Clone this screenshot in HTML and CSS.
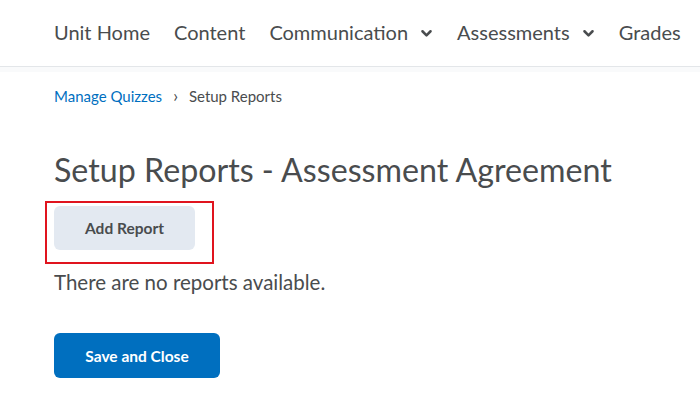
FILE: index.html
```html
<!DOCTYPE html>
<html lang="en">
<head>
    <meta charset="UTF-8">
    <title>Setup Reports</title>
    <link rel="stylesheet" href="styles.css">
</head>
<body>
    <nav class="navbar">
        <a class="nav-item">Unit Home</a>
        <a class="nav-item">Content</a>
        <a class="nav-item">Communication
            <svg class="chev" viewBox="0 0 14 10" width="13" height="9"><path d="M2.5 2.5 L7 7 L11.5 2.5" fill="none" stroke="#494c4e" stroke-width="2.8" stroke-linecap="round" stroke-linejoin="round"/></svg>
        </a>
        <a class="nav-item">Assessments
            <svg class="chev" viewBox="0 0 14 10" width="13" height="9"><path d="M2.5 2.5 L7 7 L11.5 2.5" fill="none" stroke="#494c4e" stroke-width="2.8" stroke-linecap="round" stroke-linejoin="round"/></svg>
        </a>
        <a class="nav-item">Grades</a>
    </nav>
    <div class="nav-shadow"></div>

    <main class="page">
        <div class="breadcrumbs">
            <a class="crumb-link">Manage Quizzes</a>
            <span class="crumb-sep">&rsaquo;</span>
            <span class="crumb-current">Setup Reports</span>
        </div>

        <h1>Setup Reports - Assessment Agreement</h1>

        <div class="highlight">
            <button class="btn btn-secondary">Add Report</button>
        </div>

        <p class="empty">There are no reports available.</p>

        <button class="btn btn-primary">Save and Close</button>
    </main>
</body>
</html>
```

FILE: styles.css
```css
body {
    margin: 0;
    font-family: Lato, "Open Sans", sans-serif;
    background: #ffffff;
    color: #494c4e;
}
.navbar {
    display: flex;
    align-items: center;
    height: 64px;
    padding-bottom: 2px;
    padding-left: 54px;
    gap: 24px;
    border-bottom: 1px solid #e3e6e9;
    white-space: nowrap;
    overflow: hidden;
}
.nav-item {
    font-size: 20px;
    color: #494c4e;
    display: flex;
    align-items: center;
    gap: 12px;
}
.chev {
    margin-top: 2px;
}
.nav-shadow {
    height: 5px;
    background: #f9fafb;
}
.page {
    padding: 0 54px;
}
.breadcrumbs {
    margin-top: 13px;
    font-size: 15px;
    display: flex;
    align-items: center;
    gap: 9px;
}
.crumb-link {
    color: #006fbf;
}
.crumb-sep {
    font-size: 17px;
    color: #494c4e;
    margin: 0 2px;
}
.crumb-current {
    color: #494c4e;
}
h1 {
    font-size: 32.2px;
    font-weight: 400;
    margin: 44px 0 0;
    color: #494c4e;
}
.highlight {
    display: inline-block;
    margin: 12px 0 0 -9px;
    padding: 3px 17px 12px 7px;
    border: 2px solid #e0141e;
}
.btn {
    font-family: Lato, "Open Sans", sans-serif;
    font-size: 15.5px;
    font-weight: 700;
    border: none;
    border-radius: 6px;
    cursor: pointer;
}
.btn-secondary {
    background: #e3e9f1;
    color: #494c4e;
    width: 141px;
    height: 44px;
}
.empty {
    font-size: 20.5px;
    margin: 6px 0 0;
}
.btn-primary {
    background: #006fbf;
    color: #ffffff;
    width: 166px;
    height: 45px;
    margin-top: 39px;
}
```
